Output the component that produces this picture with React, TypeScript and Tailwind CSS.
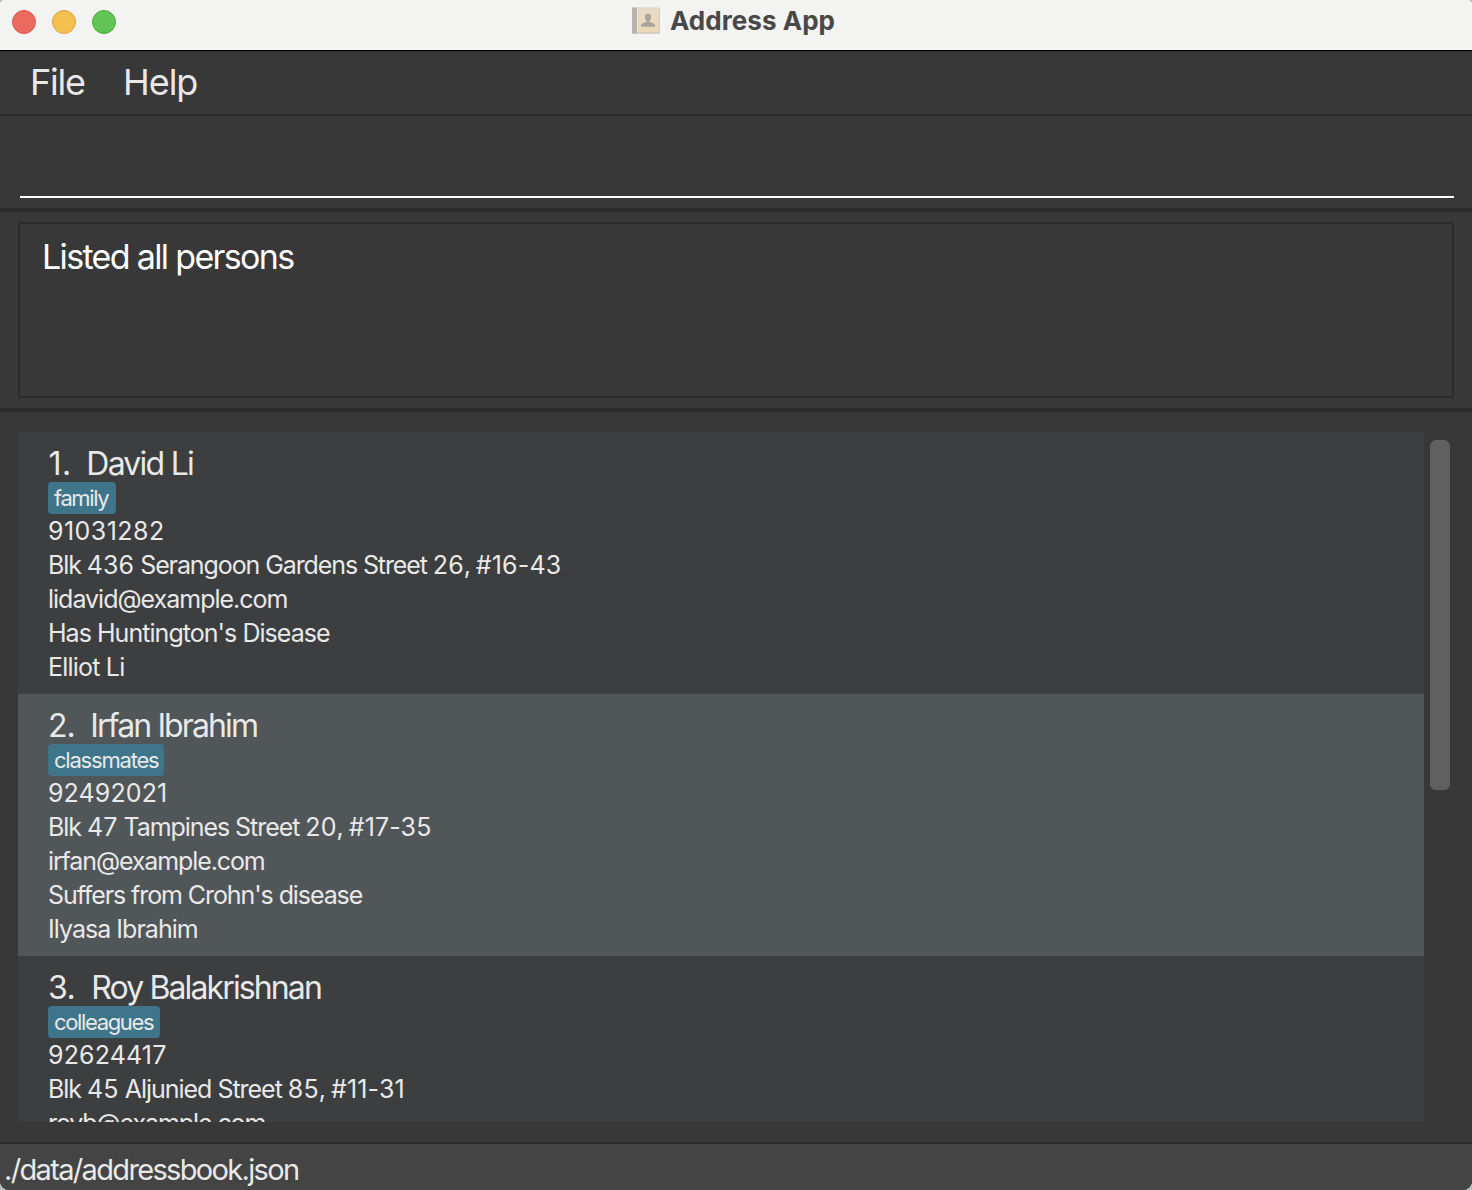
type Line = { text: string; cls: string; digits?: string };
type Person = {
  id: number;
  indexCls: string;
  name: string;
  nameCls: string;
  tag: string;
  tagCls: string;
  lines: Line[];
};

const people: Person[] = [
  {
    id: 1,
    indexCls: "w-[37.8px] tracking-[0.48px] ml-[0.5px]",
    name: "David Li",
    nameCls: "tracking-[-1.76px]",
    tag: "family",
    tagCls: "w-[68px] tracking-[-1.4px]",
    lines: [
      { text: "91031282", cls: "", digits: "tracking-[0.46px]" },
      { text: "Blk 436 Serangoon Gardens Street 26, #16-43", cls: "tracking-[-1.1px]" },
      { text: "lidavid@example.com", cls: "tracking-[-1.01px]" },
      { text: "Has Huntington's Disease", cls: "tracking-[-0.96px]" },
      { text: "Elliot Li", cls: "tracking-[-0.8px]" },
    ],
  },
  {
    id: 2,
    indexCls: "w-[42.3px] tracking-[-1px]",
    name: "Irfan Ibrahim",
    nameCls: "tracking-[-1.88px]",
    tag: "classmates",
    tagCls: "w-[116px] tracking-[-1.21px]",
    lines: [
      { text: "92492021", cls: "", digits: "tracking-[0.1px]" },
      { text: "Blk 47 Tampines Street 20, #17-35", cls: "tracking-[-1.06px]" },
      { text: "irfan@example.com", cls: "tracking-[-1.12px]" },
      { text: "Suffers from Crohn's disease", cls: "tracking-[-1.09px]" },
      { text: "Ilyasa Ibrahim", cls: "tracking-[-0.97px]" },
    ],
  },
  {
    id: 3,
    indexCls: "w-[43.3px] tracking-[-0.5px]",
    name: "Roy Balakrishnan",
    nameCls: "tracking-[-1.88px]",
    tag: "colleagues",
    tagCls: "w-[112px] tracking-[-1.35px]",
    lines: [
      { text: "92624417", cls: "", digits: "tracking-[0.15px]" },
      { text: "Blk 45 Aljunied Street 85, #11-31", cls: "tracking-[-1.02px]" },
      { text: "royb@example.com", cls: "tracking-[-1.11px]" },
    ],
  },
];

/* Digits are set looser than letters. */
function Detail({ text, cls, digits = "tracking-[0.13px]" }: Line) {
  const parts = text.split(/([#\d][\d-]*)/);
  return (
    <div className={`h-[34px] text-[25px] leading-[34px] whitespace-pre ${cls}`}>
      {parts.map((p, i) =>
        i % 2 ? (
          <span key={i} className={digits}>
            {p}
          </span>
        ) : (
          p
        ),
      )}
    </div>
  );
}

function BookIcon() {
  return (
    <svg width="28" height="28" viewBox="0 0 28 28" className="mr-[10px] shrink-0">
      <defs>
        <linearGradient id="cover" x1="0" y1="0" x2="0" y2="1">
          <stop offset="0" stopColor="#e6dcc9" />
          <stop offset="1" stopColor="#ecd7b2" />
        </linearGradient>
      </defs>
      <rect x="0" y="0.5" width="28" height="26.5" rx="1.5" fill="#d5cdc1" />
      <rect x="0" y="0.5" width="5" height="26" rx="1" fill="#b7b2ae" />
      <rect x="5" y="1.3" width="21.5" height="23.7" fill="url(#cover)" />
      <rect x="5" y="1.3" width="1" height="23.7" fill="#efe8dc" />
      <path
        d="M16 6.8c-2 0-3.100 1.400-3.100 3.200 0 1.500.6 2.800 1.500 3.600v1.400c-1.600.8-5 1.100-5.400 3.100v1.600h14v-1.600c-.4-2-3.800-2.300-5.400-3.100v-1.400c.9-.8 1.500-2.100 1.500-3.600 0-1.800-1.100-3.200-3.100-3.200z"
        fill="#aaa59d"
      />
    </svg>
  );
}

export default function App() {
  return (
    <div className="bg-[#b9c4b9]">
      <div className="flex h-[1190px] w-[1472px] flex-col overflow-hidden rounded-t-[3px] rounded-b-[9px] bg-[#383838] font-['Inter',sans-serif] text-[#e9e9e9]">
        <header className="relative flex h-[51px] shrink-0 items-start justify-center border-b border-black bg-[#f3f3f1]">
          <div className="absolute top-[10px] left-3 flex gap-4">
            <span className="size-6 rounded-full border border-[#d8584c] bg-[#ed6a5e]" />
            <span className="size-6 rounded-full border border-[#d9a23c] bg-[#f5bf4f]" />
            <span className="size-6 rounded-full border border-[#4fa73e] bg-[#61c554]" />
          </div>
          <div className="flex h-[41px] items-center pr-[4px]">
            <BookIcon />
            <h1 className="w-[166px] text-[26px] leading-[41px] font-bold tracking-[0.05px] whitespace-nowrap text-[#484848]">Address App</h1>
          </div>
        </header>

        <nav className="flex h-[65px] shrink-0 border-t border-b-2 border-t-[#2e2e2e] border-b-[#2b2b2b] pl-[30px] text-[36px] leading-[60px]">
          <span className="w-[93px] tracking-[-1.23px]">File</span>
          <span className="tracking-[-1.05px]">Help</span>
        </nav>

        <div className="h-[96px] shrink-0 border-b-4 border-[#2b2b2b] pt-2 pr-[18px] pl-5">
          <input aria-label="Command" className="block h-[74px] w-full border-b-2 border-white bg-transparent text-[34px] text-white outline-none" />
        </div>

        <section className="h-[200px] shrink-0 border-b-4 border-[#2b2b2b] px-[18px] py-[10px]">
          <div className="h-[176px] border-2 border-[#2b2b2b] pt-[12px] pl-[22px] text-[34px] leading-[42px] tracking-[-1.66px] text-white">
            Listed all persons
          </div>
        </section>

        <main className="flex h-[730px] shrink-0 pt-5 pb-5 pl-[18px]">
          <ul className="h-[690px] w-[1406px] overflow-hidden">
            {people.map((p) => (
              <li key={p.id} className={`h-[262px] pt-[11px] pl-[30px] ${p.id % 2 ? "bg-[#3c3e3f]" : "bg-[#515658]"}`}>
                <div className="flex h-[39px] text-[32px] leading-[41px] whitespace-nowrap">
                  <span className={p.indexCls}>{p.id}.</span>
                  <span className={p.nameCls}>{p.name}</span>
                </div>
                <div className={`h-8 rounded-[4px] bg-[#3f758a] pl-[6px] text-[22px] leading-8 whitespace-nowrap ${p.tagCls}`}>{p.tag}</div>
                {p.lines.map((l) => (
                  <Detail key={l.text} {...l} />
                ))}
              </li>
            ))}
          </ul>
          <div className="mt-2 ml-[6px] h-[350px] w-5 rounded-[6px] bg-[#606060]" />
        </main>

        <footer className="h-[48px] shrink-0 border-t-2 border-[#2b2b2b] bg-[#444444] pl-1 text-[29px] leading-[51px] tracking-[-1.66px]">
          ./data/addressbook.json
        </footer>
      </div>
    </div>
  );
}
